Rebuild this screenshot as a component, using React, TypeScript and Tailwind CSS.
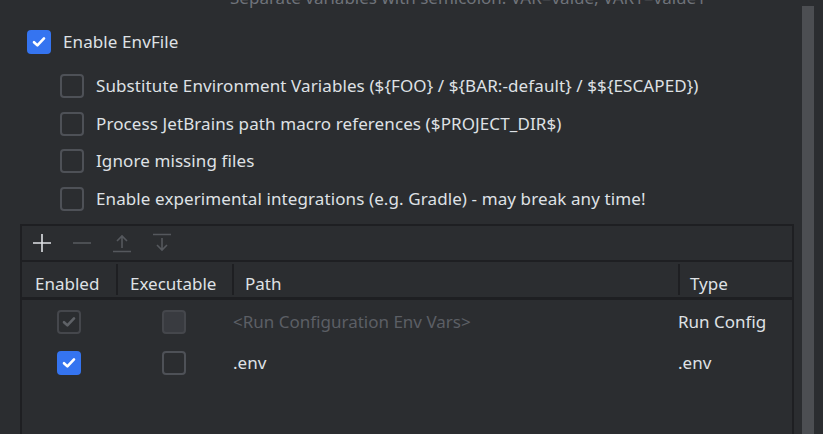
import React from "react";

const font = { fontFamily: '"Noto Sans", "Noto Sans CJK KR", sans-serif' };

function Check({ color = "#ffffff" }: { color?: string }) {
  return (
    <svg width="14" height="12" viewBox="0 0 14 12" fill="none">
      <path d="M2 6.2 L5.4 9.4 L12 2.4" stroke={color} strokeWidth="2.6" strokeLinecap="round" strokeLinejoin="round" />
    </svg>
  );
}

function Box({ state }: { state: "on" | "off" | "disabledOn" | "disabledOff" }) {
  if (state === "on")
    return (
      <div className="w-[24px] h-[24px] rounded-[4px] bg-[#3574f0] flex items-center justify-center shrink-0">
        <Check />
      </div>
    );
  if (state === "disabledOn")
    return (
      <div className="w-[24px] h-[24px] rounded-[4px] border-2 border-[#45474c] bg-[#2b2d30] flex items-center justify-center shrink-0">
        <Check color="#5f6267" />
      </div>
    );
  if (state === "disabledOff")
    return <div className="w-[24px] h-[24px] rounded-[4px] border-2 border-[#45474c] bg-[#393b40] shrink-0" />;
  return <div className="w-[24px] h-[24px] rounded-[4px] border-2 border-[#4e5157] bg-[#2b2d30] shrink-0" />;
}

const options = [
  "Substitute Environment Variables (${FOO} / ${BAR:-default} / $${ESCAPED})",
  "Process JetBrains path macro references ($PROJECT_DIR$)",
  "Ignore missing files",
  "Enable experimental integrations (e.g. Gradle) - may break any time!",
];

export default function App() {
  return (
    <div className="w-[823px] h-[434px] bg-[#2b2d30] overflow-hidden flex text-[#dfe1e5] text-[17px]" style={font}>
      <div className="w-[802px] shrink-0 flex flex-col">
        <div className="h-[8px] relative">
          <div className="absolute left-[230px] top-[-15px] text-[#6f737a] text-[17px] whitespace-nowrap">
            Separate variables with semicolon: VAR=value; VAR1=value1
          </div>
        </div>
        <div className="flex items-center h-[24px] mt-[22px] pl-[27px] gap-[12px]">
          <Box state="on" />
          <span className="tracking-[0.1px]">Enable EnvFile</span>
        </div>
        <div className="flex flex-col pl-[60px] mt-[20px] gap-[13.5px]">
          {options.map((o) => (
            <div key={o} className="flex items-center h-[24px] gap-[12px] whitespace-nowrap">
              <Box state="off" />
              <span className="tracking-[0.1px]">{o}</span>
            </div>
          ))}
        </div>
        <div className="ml-[20px] mt-[13px] w-[774px] flex-1 border-2 border-b-0 border-[#1e1f22] flex flex-col">
          <div className="h-[36px] flex items-center gap-[20px] pl-[10px] border-b-2 border-[#1e1f22]">
            <svg width="20" height="20" viewBox="0 0 20 20">
              <path d="M10 1 V19 M1 10 H19" stroke="#dfe1e5" strokeWidth="1.6" />
            </svg>
            <svg width="20" height="20" viewBox="0 0 20 20">
              <path d="M1 10 H19" stroke="#55585d" strokeWidth="1.6" />
            </svg>
            <svg width="20" height="20" viewBox="0 0 20 20">
              <path d="M1 18.5 H19 M10 3 V15 M5 8 L10 3 L15 8" stroke="#55585d" strokeWidth="1.6" fill="none" />
            </svg>
            <svg width="20" height="20" viewBox="0 0 20 20">
              <path d="M1 1.5 H19 M10 5 V17 M5 12 L10 17 L15 12" stroke="#55585d" strokeWidth="1.6" fill="none" />
            </svg>
          </div>
          <div className="h-[38px] flex items-stretch border-b-[3px] border-[#1e1f22] text-[17px]">
            <div className="w-[94px] flex items-center pl-[13px] pt-[10px]">Enabled</div>
            <div className="w-[2px] bg-[#1e1f22] my-[2px]" />
            <div className="w-[114px] flex items-center pl-[12px] pt-[10px]">Executable</div>
            <div className="w-[2px] bg-[#1e1f22] my-[2px]" />
            <div className="w-[444px] flex items-center pl-[11px] pt-[10px]">Path</div>
            <div className="w-[2px] bg-[#1e1f22] my-[2px]" />
            <div className="flex-1 flex items-center pl-[10px] pt-[10px]">Type</div>
          </div>
          <div className="flex items-center h-[42px] pt-[2px]">
            <div className="w-[97px] pl-[35px]"><Box state="disabledOn" /></div>
            <div className="w-[114px] pl-[43px]"><Box state="disabledOff" /></div>
            <div className="w-[445px] text-[#5c5f65] whitespace-nowrap">&lt;Run Configuration Env Vars&gt;</div>
            <div className="flex-1 whitespace-nowrap">Run Config</div>
          </div>
          <div className="flex items-center h-[42px]">
            <div className="w-[97px] pl-[35px]"><Box state="on" /></div>
            <div className="w-[114px] pl-[43px]"><Box state="off" /></div>
            <div className="w-[445px] whitespace-nowrap">.env</div>
            <div className="flex-1 whitespace-nowrap">.env</div>
          </div>
        </div>
      </div>
      <div className="w-[12px] mt-[6px] bg-[#4c4e52] shrink-0" />
    </div>
  );
}
